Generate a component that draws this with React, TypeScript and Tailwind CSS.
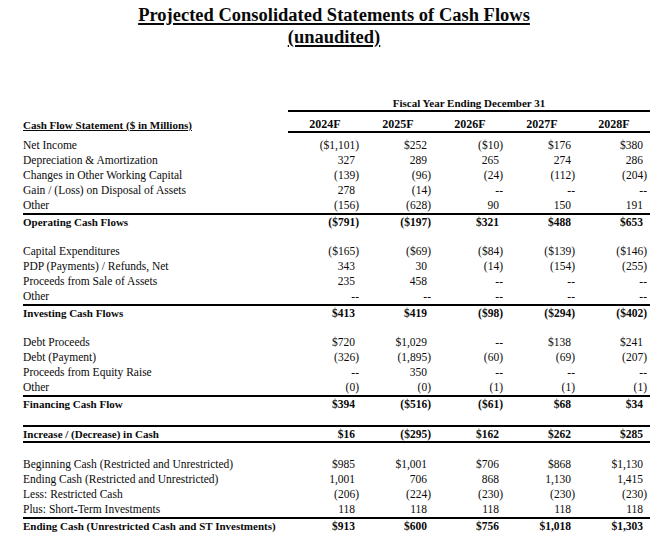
import React from "react";

type Row =
  | { kind: "item"; label: string; v: string[] }
  | { kind: "total"; label: string; v: string[] }
  | { kind: "box"; label: string; v: string[] }
  | { kind: "blank" };

const rows: Row[] = [
  { kind: "item", label: "Net Income", v: ["($1,101)", "$252", "($10)", "$176", "$380"] },
  { kind: "item", label: "Depreciation & Amortization", v: ["327", "289", "265", "274", "286"] },
  { kind: "item", label: "Changes in Other Working Capital", v: ["(139)", "(96)", "(24)", "(112)", "(204)"] },
  { kind: "item", label: "Gain / (Loss) on Disposal of Assets", v: ["278", "(14)", "--", "--", "--"] },
  { kind: "item", label: "Other", v: ["(156)", "(628)", "90", "150", "191"] },
  { kind: "total", label: "Operating Cash Flows", v: ["($791)", "($197)", "$321", "$488", "$653"] },
  { kind: "blank" },
  { kind: "item", label: "Capital Expenditures", v: ["($165)", "($69)", "($84)", "($139)", "($146)"] },
  { kind: "item", label: "PDP (Payments) / Refunds, Net", v: ["343", "30", "(14)", "(154)", "(255)"] },
  { kind: "item", label: "Proceeds from Sale of Assets", v: ["235", "458", "--", "--", "--"] },
  { kind: "item", label: "Other", v: ["--", "--", "--", "--", "--"] },
  { kind: "total", label: "Investing Cash Flows", v: ["$413", "$419", "($98)", "($294)", "($402)"] },
  { kind: "blank" },
  { kind: "item", label: "Debt Proceeds", v: ["$720", "$1,029", "--", "$138", "$241"] },
  { kind: "item", label: "Debt (Payment)", v: ["(326)", "(1,895)", "(60)", "(69)", "(207)"] },
  { kind: "item", label: "Proceeds from Equity Raise", v: ["--", "350", "--", "--", "--"] },
  { kind: "item", label: "Other", v: ["(0)", "(0)", "(1)", "(1)", "(1)"] },
  { kind: "total", label: "Financing Cash Flow", v: ["$394", "($516)", "($61)", "$68", "$34"] },
  { kind: "blank" },
  { kind: "box", label: "Increase / (Decrease) in Cash", v: ["$16", "($295)", "$162", "$262", "$285"] },
  { kind: "blank" },
  { kind: "item", label: "Beginning Cash (Restricted and Unrestricted)", v: ["$985", "$1,001", "$706", "$868", "$1,130"] },
  { kind: "item", label: "Ending Cash (Restricted and Unrestricted)", v: ["1,001", "706", "868", "1,130", "1,415"] },
  { kind: "item", label: "Less: Restricted Cash", v: ["(206)", "(224)", "(230)", "(230)", "(230)"] },
  { kind: "item", label: "Plus: Short-Term Investments", v: ["118", "118", "118", "118", "118"] },
  { kind: "total", label: "Ending Cash (Unrestricted Cash and ST Investments)", v: ["$913", "$600", "$756", "$1,018", "$1,303"] },
];

function Val({ s, i }: { s: string; i: number }) {
  const paren = s.endsWith(")") || s === "--";
  return (
    <div
      className={`${i === 0 ? "w-[74px]" : "w-[72px]"} text-right ${paren ? "pr-[3px]" : "pr-[7px]"}`}
    >
      {s}
    </div>
  );
}

function Cells({ v }: { v: string[] }) {
  return (
    <div className="flex">
      {v.map((s, i) => (
        <Val key={i} s={s} i={i} />
      ))}
    </div>
  );
}

export default function App() {
  return (
    <div
      className="w-[668px] h-[539px] bg-white text-[#0a0a0a] overflow-hidden"
      style={{ fontFamily: '"Liberation Serif", "Times New Roman", serif' }}
    >
      <div className="pt-[4px] text-center font-bold text-[18.5px] leading-[22px]">
        <div>
          <span className="underline decoration-2 underline-offset-[2px]">
            Projected Consolidated Statements of Cash Flows
          </span>
        </div>
        <div>
          <span className="underline decoration-2 underline-offset-[2px]">(unaudited)</span>
        </div>
      </div>

      <div className="mt-[49px] ml-[23px] w-[627px] text-[11.5px] leading-[15px]">
        <div className="flex">
          <div className="w-[265px]" />
          <div className="w-[362px] h-[15px] border-b-2 border-black text-center font-bold text-[11px] leading-[13px]">
            Fiscal Year Ending December 31
          </div>
        </div>
        <div className="flex items-end h-[21px]">
          <div className="w-[265px] font-bold text-[11px] leading-[14px] pb-[1px]">
            <span className="underline underline-offset-[1px]">Cash Flow Statement ($ in Millions)</span>
          </div>
          <div className="w-[362px] h-[21px] border-b-2 border-black flex items-end font-bold text-[12px] leading-[14px]">
            {["2024F", "2025F", "2026F", "2027F", "2028F"].map((y, i) => (
              <div key={y} className={`${i === 0 ? "w-[74px]" : "w-[72px]"} text-center`}>
                {y}
              </div>
            ))}
          </div>
        </div>
        <div className="h-[5px]" />
        {rows.map((r, idx) => {
          if (r.kind === "blank") {
            const next = rows[idx + 1];
            const prev = rows[idx - 1];
            const h = next && next.kind === "box" ? "h-[14px]" : prev && prev.kind === "box" ? "h-[14px]" : "h-[15px]";
            return <div key={idx} className={h} />;
          }
          if (r.kind === "item") {
            return (
              <div key={idx} className="flex h-[15px] leading-[15px]">
                <div className="w-[265px] whitespace-nowrap">{r.label}</div>
                <Cells v={r.v} />
              </div>
            );
          }
          if (r.kind === "total") {
            return (
              <div key={idx} className="flex h-[16px] leading-[14px] border-t-2 border-black font-bold">
                <div className="w-[265px] whitespace-nowrap text-[11px]">{r.label}</div>
                <Cells v={r.v} />
              </div>
            );
          }
          return (
            <div key={idx} className="flex h-[18px] leading-[14px] border-y-2 border-black font-bold">
              <div className="w-[265px] whitespace-nowrap text-[11px]">{r.label}</div>
              <Cells v={r.v} />
            </div>
          );
        })}
      </div>
    </div>
  );
}
